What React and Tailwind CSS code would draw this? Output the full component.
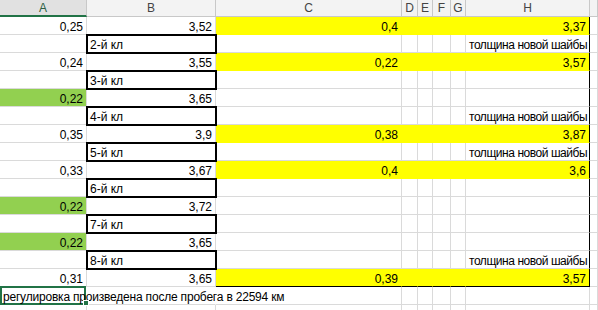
import React from 'react';
import clsx from 'clsx';

const COLS = ['A', 'B', 'C', 'D', 'E', 'F', 'G', 'H', ''];
const NOTE = 'толщина новой шайбы';

// one entry per sheet row: a = col A, b = col B, c = col C, h = col H
const ROWS = [
  { a: '0,25', b: '3,52', c: '0,4', h: '3,37', yellow: true },
  { box: '2-й кл', h: NOTE },
  { a: '0,24', b: '3,55', c: '0,22', h: '3,57', yellow: true },
  { box: '3-й кл' },
  { a: '0,22', b: '3,65', green: true },
  { box: '4-й кл', h: NOTE },
  { a: '0,35', b: '3,9', c: '0,38', h: '3,87', yellow: true },
  { box: '5-й кл', h: NOTE },
  { a: '0,33', b: '3,67', c: '0,4', h: '3,6', yellow: true },
  { box: '6-й кл' },
  { a: '0,22', b: '3,72', green: true },
  { box: '7-й кл' },
  { a: '0,22', b: '3,65', green: true },
  { box: '8-й кл', h: NOTE },
  { a: '0,31', b: '3,65', c: '0,39', h: '3,57', yellow: true, last: true },
];

function Cell({ children, right, className }) {
  return (
    <div
      className={clsx(
        'h-[18px] border-r border-b border-[#dadada] flex items-end px-[3px] leading-[14px] whitespace-nowrap',
        right ? 'justify-end' : 'justify-start',
        className
      )}
    >
      {children}
    </div>
  );
}

function Row({ r }) {
  const y = r.yellow;
  return (
    <>
      <Cell right className={r.green ? 'bg-[#92d050] border-[#92d050]' : ''}>
        {r.a}
      </Cell>
      {r.box ? (
        <Cell className="relative z-10 outline-2 outline-black -outline-offset-1">{r.box}</Cell>
      ) : (
        <Cell right>{r.b}</Cell>
      )}
      <Cell right className={clsx(y && 'bg-[#ffff00] border-[#ffff00]', r.last && 'border-b-black')}>
        {r.c}
      </Cell>
      {[0, 1, 2, 3].map((i) => (
        <Cell key={i} className={clsx(y && 'bg-[#ffff00] border-[#ffff00]', r.last && 'border-b-black')} />
      ))}
      <Cell
        right={y}
        className={clsx(
          y ? 'bg-[#ffff00] border-[#ffff00]' : 'tracking-[-0.45px]',
          'border-r-black',
          r.last && 'border-b-black'
        )}
      >
        {r.h}
      </Cell>
      <Cell />
    </>
  );
}

export default function App() {
  return (
    <div className="w-[598px] h-[310px] overflow-hidden bg-white text-black text-[12px] font-['Liberation_Sans',Arial,sans-serif]">
      <div className="grid grid-cols-[87px_129px_186px_16px_15px_18px_15px_124px_1fr]">
        {/* column headers */}
        {COLS.map((c, i) => (
          <div
            key={i}
            className={clsx(
              'h-[17px] flex items-center justify-center border-r border-[#c8c8c8] leading-none',
              c === 'A'
                ? 'bg-[#e1e1e1] text-[#2c5f43] border-b-2 border-b-[#217346]'
                : 'bg-[#f3f3f3] text-[#444] border-b border-b-[#c8c8c8]'
            )}
          >
            {c}
          </div>
        ))}

        {ROWS.map((r, i) => (
          <Row key={i} r={r} />
        ))}

        {/* selected cell with overflowing note */}
        <div className="relative h-[18px] border-b border-[#dadada] flex items-end px-[3px] leading-[14px] whitespace-nowrap">
          <span className="relative z-10 tracking-[-0.2px]">регулировка произведена после пробега в 22594 км</span>
          <div className="absolute left-0 top-[-1px] w-[86px] h-[19px] border-2 border-[#217346]" />
          <div className="absolute left-[83px] top-[13px] w-[6px] h-[6px] bg-[#217346] border border-white z-20" />
        </div>
        <Cell className="border-r-transparent" />
        <Cell />
        {[0, 1, 2, 3].map((i) => (
          <Cell key={i} />
        ))}
        <Cell />
        <Cell />

        {Array.from({ length: 9 }).map((_, i) => (
          <Cell key={'x' + i} />
        ))}
      </div>
    </div>
  );
}
